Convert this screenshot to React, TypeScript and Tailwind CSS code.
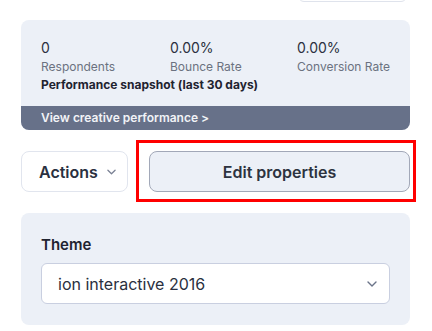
import React from "react";

function Chevron({ className }: { className?: string }) {
  return (
    <svg viewBox="0 0 10 6" className={className} fill="none">
      <path d="M1 1l4 4 4-4" stroke="currentColor" strokeWidth="1.4" strokeLinecap="round" strokeLinejoin="round" />
    </svg>
  );
}

const STATS = [
  { value: "0", label: "Respondents", width: "w-[129px]" },
  { value: "0.00%", label: "Bounce Rate", width: "w-[127px]" },
  { value: "0.00%", label: "Conversion Rate", width: "w-[120px]" },
];

export default function App() {
  return (
    <div className="relative w-[432px] h-[331px] overflow-hidden bg-white px-[21px] pr-[22px] font-['Inter','Liberation_Sans',sans-serif] text-[#252b3a]">
      {/* cut-off control above */}
      <div className="flex justify-end pr-[3px]">
        <div className="-mt-[38px] h-[40px] w-[109px] rounded-md border border-[#dfe3ec] bg-white" />
      </div>

      {/* performance snapshot */}
      <div className="mt-[18px] overflow-hidden rounded-lg bg-[#ecf0f7]">
        <div className="px-5 pt-[18px] pb-[12px]">
          <div className="flex">
            {STATS.map((s) => (
              <div key={s.label} className={`${s.width} shrink-0`}>
                <div className="text-[14px] leading-[20px] text-[#2b3040]">{s.value}</div>
                <div className="text-[12px] leading-[18px] text-[#6b7280] whitespace-nowrap">{s.label}</div>
              </div>
            ))}
          </div>
          <div className="text-[12px] leading-[18px] font-bold text-[#1f2330]">
            Performance snapshot (last 30 days)
          </div>
        </div>
        <div className="h-[24px] bg-[#677189] px-5 text-[12px] leading-[24px] font-semibold text-[#f1f3f7]">
          View creative performance &gt;
        </div>
      </div>

      {/* actions row */}
      <div className="relative mt-[21px] flex gap-[21px]">
        <button className="flex h-[41px] w-[107px] items-center gap-[9px] rounded-lg border border-[#e1e5ee] bg-white pl-[17px] text-[16px] font-semibold text-[#2a3040]">
          Actions
          <Chevron className="h-[6px] w-[9px] text-[#7a8194]" />
        </button>
        <button className="h-[41px] flex-1 rounded-lg border border-[#a2a8b8] bg-[#ecf0f7] text-[16px] font-semibold text-[#2d3340]">
          Edit properties
        </button>
        <div className="pointer-events-none absolute -top-[11px] left-[115px] h-[62px] w-[280px] border-[3px] border-[#ff0000]" />
      </div>

      {/* theme */}
      <div className="mt-[21px] rounded-lg bg-[#ecf0f7] px-5 pt-[22px] pb-[21px]">
        <div className="text-[15px] leading-[20px] font-semibold text-[#1f2330]">Theme</div>
        <div className="mt-[8px] flex h-[41px] items-center justify-between rounded-md border border-[#c9cfe0] bg-white pl-[16px] pr-[12px]">
          <span className="text-[16px] text-[#2a3040]">ion interactive 2016</span>
          <Chevron className="h-[6px] w-[10px] text-[#6b7489]" />
        </div>
      </div>
    </div>
  );
}
